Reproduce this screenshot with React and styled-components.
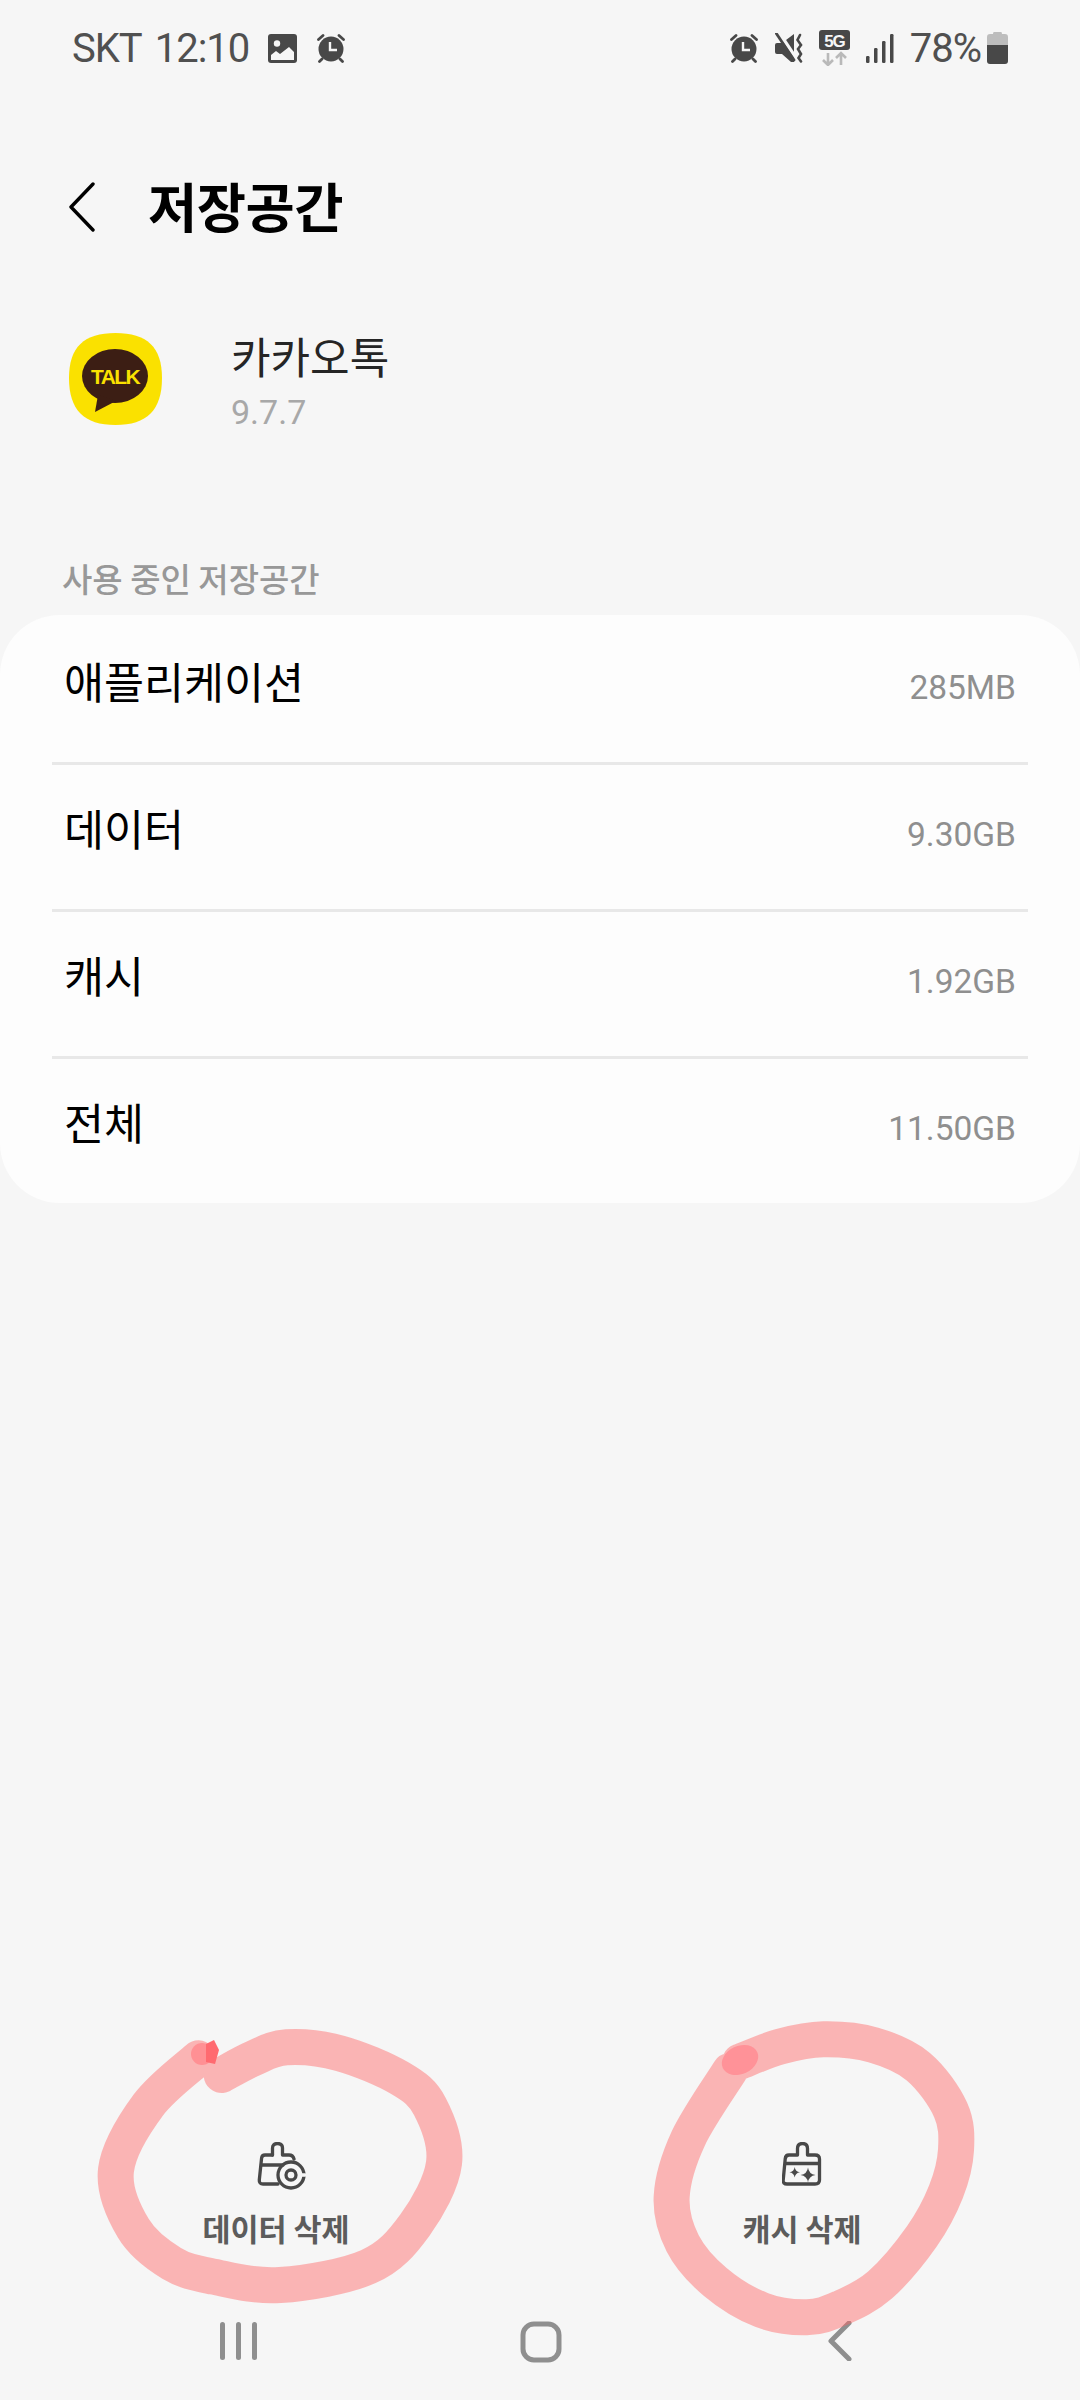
import React from "react";
import styled, { createGlobalStyle } from "styled-components";

const KR = `"Noto Sans CJK KR", "Noto Sans", sans-serif`;

const GlobalStyle = createGlobalStyle`
  html, body {
    margin: 0;
    padding: 0;
    background: #f6f6f6;
  }
  * {
    box-sizing: border-box;
  }
`;

const rows = [
  { label: "애플리케이션", value: "285MB" },
  { label: "데이터", value: "9.30GB" },
  { label: "캐시", value: "1.92GB" },
  { label: "전체", value: "11.50GB" }
];

// pen strokes, traced from 3x crops: [x, y] in crop pixels
const dataCircle = {
  x: 80,
  y: 2000,
  points: [
    [425, 225], [520, 175], [620, 142], [780, 160], [960, 235], [1050, 320], [1092, 490],
    [1005, 675], [865, 800], [600, 855], [400, 830], [275, 790], [160, 685],
    [108, 510], [205, 315], [355, 175]
  ]
};

const cacheCircle = {
  x: 640,
  y: 2000,
  points: [
    [300, 185], [420, 140], [550, 118], [700, 135], [835, 200], [932, 330], [948, 450],
    [918, 575], [845, 710], [720, 855], [600, 925], [500, 952], [365, 930], [225, 845],
    [128, 730], [95, 590], [145, 415], [270, 212]
  ]
};

const smoothPath = ({ x, y, points }) => {
  const p = points.map(([px, py]) => [x + px / 3, y + py / 3]);
  let d = `M${p[0][0]} ${p[0][1]}`;
  for (let i = 0; i < p.length - 1; i++) {
    const a = p[Math.max(i - 1, 0)];
    const b = p[i];
    const c = p[i + 1];
    const e = p[Math.min(i + 2, p.length - 1)];
    const c1 = [b[0] + (c[0] - a[0]) / 6, b[1] + (c[1] - a[1]) / 6];
    const c2 = [c[0] - (e[0] - b[0]) / 6, c[1] - (e[1] - b[1]) / 6];
    d += ` C${c1[0]} ${c1[1]} ${c2[0]} ${c2[1]} ${c[0]} ${c[1]}`;
  }
  return d;
};

const AlarmIcon = () => (
  <svg width="30" height="30" viewBox="0 0 30 30">
    <circle cx="15" cy="16" r="12.5" fill="#484848" />
    <path d="M2.5 6.5 L7 2.5 M27.5 6.5 L23 2.5 M6 26 L3.5 28.5 M24 26 L26.5 28.5" stroke="#484848" strokeWidth="2.8" strokeLinecap="round" />
    <path d="M14 9 V17 H21" stroke="#f6f6f6" strokeWidth="2.4" fill="none" />
  </svg>
);

const ImageIcon = () => (
  <svg width="29" height="29" viewBox="0 0 29 29">
    <rect width="29" height="29" rx="3" fill="#484848" />
    <circle cx="9" cy="9.5" r="3.2" fill="#f6f6f6" />
    <path d="M3 26 V21 L8 17 L12 20 L21 13 L26 18 V26 Z" fill="#f6f6f6" />
  </svg>
);

const MuteIcon = () => (
  <svg width="28" height="30" viewBox="0 0 28 30">
    <path d="M0 12 Q0 10 2 10 H7 L19 1 V29 H16 L7 21 H2 Q0 21 0 19 Z" fill="#484848" />
    <path d="M3 -2 L21 25" stroke="#f6f6f6" strokeWidth="3.5" />
    <path d="M1 0 L19 27" stroke="#484848" strokeWidth="2.8" strokeLinecap="round" />
    <path d="M25 2 L22.5 7 L26 12 L23 16 L26 21 L23.5 25 L26 28.5" stroke="#484848" strokeWidth="2.6" fill="none" strokeLinecap="round" />
  </svg>
);

const NetworkIcon = () => (
  <svg width="31" height="36" viewBox="0 0 31 36">
    <rect width="31" height="20" rx="3" fill="#484848" />
    <text x="15.5" y="16.5" textAnchor="middle" fontFamily="Liberation Sans, sans-serif" fontWeight="700" fontSize="17" fill="#f6f6f6">5G</text>
    <path d="M9 23 V35 M4 30 L9 35 L14 30 M22 35 V23 M17 28 L22 23 L27 28" stroke="#b9b9b9" strokeWidth="2.6" fill="none" />
  </svg>
);

const SignalIcon = () => (
  <svg width="28" height="30" viewBox="0 0 28 30">
    <rect x="0" y="23" width="3.5" height="7" rx="1.2" fill="#484848" />
    <rect x="8" y="15" width="3.5" height="15" rx="1.2" fill="#484848" />
    <rect x="16" y="8" width="3.5" height="22" rx="1.2" fill="#484848" />
    <rect x="24" y="1" width="3.5" height="29" rx="1.2" fill="#484848" />
  </svg>
);

const BatteryIcon = () => (
  <svg width="21" height="32" viewBox="0 0 21 32">
    <path d="M7 0 H14 Q15 0 15 2 H18 Q21 2 21 5 V13 H0 V5 Q0 2 3 2 H6 Q6 0 7 0 Z" fill="#bdbdbd" />
    <path d="M0 13 H21 V29 Q21 32 18 32 H3 Q0 32 0 29 Z" fill="#484848" />
  </svg>
);

const TalkIcon = () => (
  <svg width="93" height="92" viewBox="0 0 93 92">
    <path d="M46.5 0 C78 0 93 14 93 45 C93 77 78 92 46.5 92 C15 92 0 77 0 45 C0 14 15 0 46.5 0 Z" fill="#fae100" />
    <ellipse cx="46" cy="43" rx="33" ry="27" fill="#3c1e14" />
    <path d="M29 62 L26 79 L47 68 Z" fill="#3c1e14" />
    <text x="46" y="51" textAnchor="middle" fontFamily="Liberation Sans, sans-serif" fontWeight="700" fontSize="21" letterSpacing="-1.6" fill="#fae100">TALK</text>
  </svg>
);

const DataBrushIcon = () => (
  <svg width="62" height="48" viewBox="-12 0 62 48" fill="none" stroke="#484848" strokeWidth="3.3" strokeLinejoin="round" strokeLinecap="round">
    <path d="M15.5 13 V6 Q15.5 1.5 20.5 1.5 Q25.5 1.5 25.5 6 V13 H32 Q36 13 37 17" />
    <path d="M15.5 13 H8 Q5 13 4.6 16 L2.3 38 Q2 42 6 42 H21" />
    <path d="M4.5 23 H26" />
    <circle cx="34" cy="33" r="13" />
    <circle cx="34" cy="33" r="5" />
    <path d="M44 33 H48" stroke="#f6f6f6" />
  </svg>
);

const CacheBrushIcon = () => (
  <svg width="40" height="44" viewBox="0 0 40 44" fill="none" stroke="#484848" strokeWidth="3.3" strokeLinejoin="round">
    <path d="M15.5 13 V6.5 Q15.5 1.5 20.5 1.5 Q25.5 1.5 25.5 6.5 V13 H33 Q37.5 13 37.5 17 V38 Q37.5 42 33 42 H5 Q0.8 42 1.2 38 L3.2 17 Q3.5 13 7 13 Z" />
    <path d="M3.5 21.5 H37.5" />
    <path d="M12.7 25 Q13.3 29.7 18 30.3 Q13.3 31 12.7 35.5 Q12 31 7.4 30.3 Q12 29.7 12.7 25 Z" fill="#484848" stroke="none" />
    <path d="M26 25.5 Q26.8 32 33.5 33 Q26.8 34 26 40.5 Q25.2 34 18.5 33 Q25.2 32 26 25.5 Z" fill="#484848" stroke="none" />
  </svg>
);

const Screen = styled.div`
  position: relative;
  width: 1080px;
  height: 2400px;
  overflow: hidden;
  display: flex;
  flex-direction: column;
  background: #f6f6f6;
  font-family: ${KR};
`;

const StatusBar = styled.div`
  height: 60px;
  margin-top: 18px;
  padding: 0 72px;
  display: flex;
  align-items: center;
  justify-content: space-between;
  color: #505050;
  font-family: Roboto, sans-serif;
  font-size: 40px;
  letter-spacing: -1px;
`;

const StatusGroup = styled.div`
  display: flex;
  align-items: center;
  gap: ${(p) => p.$gap}px;
`;

const NoticeIcons = styled(StatusGroup)`
  margin-left: 6px;
`;

const Battery = styled.span`
  display: flex;
  margin-left: -10px;
`;

const Header = styled.div`
  height: 66px;
  margin-top: 96px;
  padding-left: 68px;
  display: flex;
  align-items: center;
  gap: 52px;
`;

const Title = styled.h1`
  margin: 0;
  padding-bottom: 6px;
  font-size: 53.5px;
  font-weight: 700;
  color: #000;
  letter-spacing: -0.5px;
`;

const AppRow = styled.div`
  margin-top: 88px;
  padding-left: 69px;
  display: flex;
  align-items: flex-start;
  gap: 69px;
`;

const AppIcon = styled.div`
  display: flex;
  margin-top: 5px;
`;

const AppText = styled.div`
  display: flex;
  flex-direction: column;
  gap: 10px;
`;

const AppName = styled.div`
  font-size: 43px;
  line-height: 54px;
  color: #252525;
`;

const AppVersion = styled.div`
  font-family: Roboto, sans-serif;
  font-size: 34px;
  line-height: 40px;
  color: #a8a8a8;
`;

const SectionLabel = styled.div`
  margin-top: 124px;
  padding-left: 62px;
  font-size: 33px;
  line-height: 44px;
  font-weight: 500;
  color: #989898;
`;

const Card = styled.div`
  margin-top: 15px;
  background: #fdfdfd;
  border-radius: 60px;
  padding: 3px 52px 0;
`;

const Row = styled.div`
  height: 147px;
  display: flex;
  align-items: center;
  justify-content: space-between;
  padding: 0 12px;
  border-bottom: 3px solid #e8e8e8;

  &:last-child {
    height: 144px;
    border-bottom: none;
  }
`;

const RowLabel = styled.span`
  font-size: 43.5px;
  line-height: 60px;
  color: #000;
  padding-bottom: 18px;
`;

const RowValue = styled.span`
  font-family: Roboto, sans-serif;
  font-size: 33.5px;
  color: #8f8f8f;
  padding-bottom: 5px;
`;

const Actions = styled.div`
  margin-top: auto;
  margin-bottom: 50px;
  padding-left: 166px;
  display: flex;
  gap: 306px;
`;

const Action = styled.div`
  width: 220px;
  display: flex;
  flex-direction: column;
  align-items: center;
  gap: 16px;
`;

const ActionIcon = styled.div`
  height: 48px;
  display: flex;
  align-items: flex-start;
`;

const ActionLabel = styled.span`
  font-size: 30.5px;
  line-height: 44px;
  font-weight: 700;
  color: #5c5c5c;
`;

const NavBar = styled.div`
  height: 100px;
  padding: 21px 0 0 219px;
  display: flex;
  align-items: flex-start;
  gap: 261px;
`;

const Marker = styled.svg`
  position: absolute;
  left: 0;
  top: 0;
  pointer-events: none;
`;

export default function App() {
  return (
    <Screen>
      <GlobalStyle />
      <StatusBar>
        <StatusGroup $gap={13}>
          <span>SKT</span>
          <span>12:10</span>
          <NoticeIcons $gap={19}>
            <ImageIcon />
            <AlarmIcon />
          </NoticeIcons>
        </StatusGroup>
        <StatusGroup $gap={16}>
          <AlarmIcon />
          <MuteIcon />
          <NetworkIcon />
          <SignalIcon />
          <span>78%</span>
          <Battery>
            <BatteryIcon />
          </Battery>
        </StatusGroup>
      </StatusBar>

      <Header>
        <svg width="28" height="50" viewBox="0 0 28 50" fill="none" stroke="#000" strokeWidth="3.4" strokeLinecap="round" strokeLinejoin="round">
          <path d="M25 2 L3 25 L25 48" />
        </svg>
        <Title>저장공간</Title>
      </Header>

      <AppRow>
        <AppIcon>
          <TalkIcon />
        </AppIcon>
        <AppText>
          <AppName>카카오톡</AppName>
          <AppVersion>9.7.7</AppVersion>
        </AppText>
      </AppRow>

      <SectionLabel>사용 중인 저장공간</SectionLabel>

      <Card>
        {rows.map((row) => (
          <Row key={row.label}>
            <RowLabel>{row.label}</RowLabel>
            <RowValue>{row.value}</RowValue>
          </Row>
        ))}
      </Card>

      <Actions>
        <Action>
          <ActionIcon>
            <DataBrushIcon />
          </ActionIcon>
          <ActionLabel>데이터 삭제</ActionLabel>
        </Action>
        <Action>
          <ActionIcon>
            <CacheBrushIcon />
          </ActionIcon>
          <ActionLabel>캐시 삭제</ActionLabel>
        </Action>
      </Actions>

      <NavBar>
        <svg width="40" height="40" viewBox="0 0 40 40" fill="#8f8f8f">
          <rect x="1" y="1" width="5" height="38" rx="2.5" />
          <rect x="17" y="1" width="5" height="38" rx="2.5" />
          <rect x="33" y="1" width="5" height="38" rx="2.5" />
        </svg>
        <svg width="42" height="42" viewBox="0 0 42 42" fill="none" stroke="#8f8f8f" strokeWidth="5">
          <rect x="3" y="3" width="36" height="36" rx="11" />
        </svg>
        <svg width="29" height="40" viewBox="0 0 29 40" fill="none" stroke="#8f8f8f" strokeWidth="5" strokeLinecap="round" strokeLinejoin="round">
          <path d="M26 2 L8 20 L26 38" />
        </svg>
      </NavBar>

      <Marker width="1080" height="2400" viewBox="0 0 1080 2400">
        <g fill="none" stroke="#ff6464" strokeOpacity="0.45" strokeWidth="36" strokeLinecap="round" strokeLinejoin="round">
          <path d={smoothPath(dataCircle)} />
          <path d={smoothPath(cacheCircle)} />
        </g>
        <circle cx="202" cy="2054" r="11" fill="#ff9094" />
        <path d="M206 2044 L214 2040 L219 2050 L215 2064 L206 2062 Z" fill="#ff6a70" />
        <ellipse cx="740" cy="2060" rx="19" ry="14" transform="rotate(-25 740 2060)" fill="#ff9298" />
      </Marker>
    </Screen>
  );
}
